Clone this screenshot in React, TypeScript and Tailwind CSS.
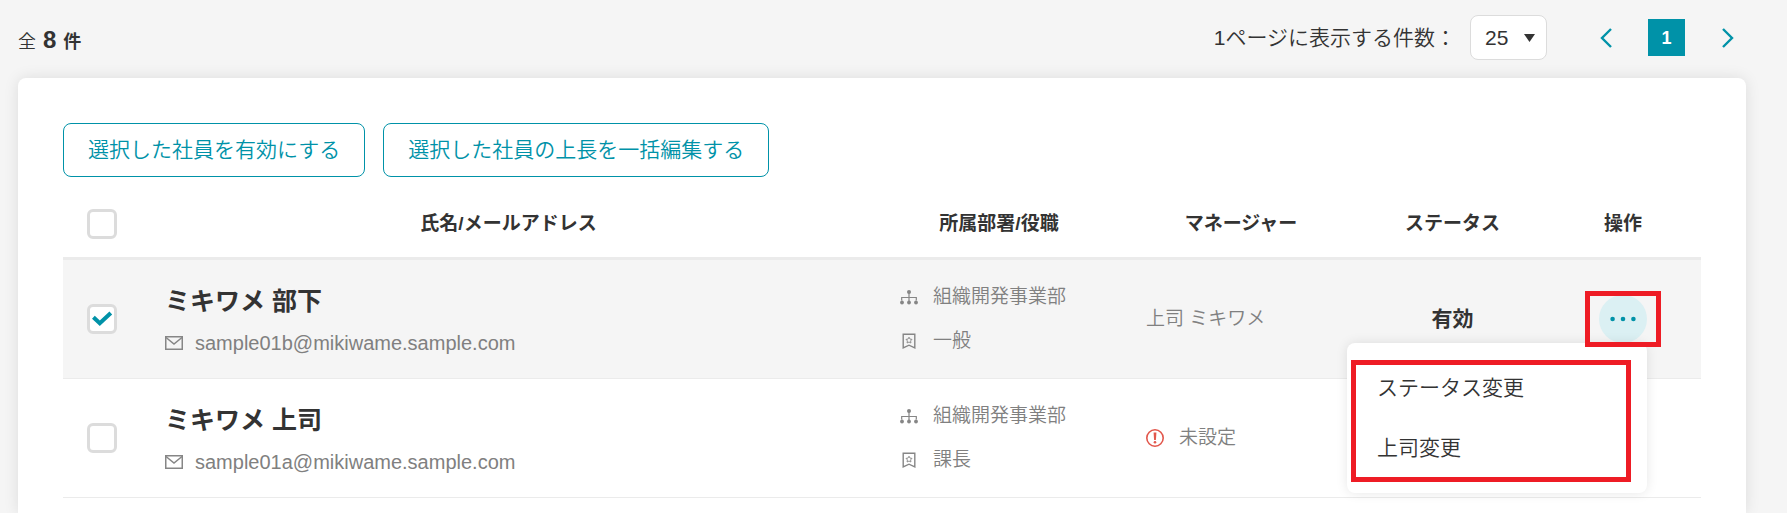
import { useState } from 'react';
import type { ReactNode } from 'react';

interface Employee {
  id: string;
  name: string;
  email: string;
  department: string;
  position: string;
  manager: string | null;
  status: string | null;
}

const employees: Employee[] = [
  {
    id: '01b',
    name: 'ミキワメ 部下',
    email: 'sample01b@mikiwame.sample.com',
    department: '組織開発事業部',
    position: '一般',
    manager: '上司 ミキワメ',
    status: '有効',
  },
  {
    id: '01a',
    name: 'ミキワメ 上司',
    email: 'sample01a@mikiwame.sample.com',
    department: '組織開発事業部',
    position: '課長',
    manager: null,
    status: null,
  },
];

function MailIcon() {
  return (
    <svg className="h-[18px] w-[18px] shrink-0" viewBox="0 0 18 18" fill="none" stroke="#868686" strokeWidth="1.5" aria-hidden="true">
      <rect x="0.75" y="2.75" width="16.5" height="12.5" />
      <path d="M1 3.5L9 10L17 3.5" />
    </svg>
  );
}

function DepartmentIcon() {
  return (
    <svg className="h-[18px] w-[18px] shrink-0" viewBox="0 0 18 18" fill="#868686" aria-hidden="true">
      <circle cx="9" cy="4" r="2" />
      <circle cx="2" cy="14.5" r="1.9" />
      <circle cx="9" cy="14.5" r="1.9" />
      <circle cx="16" cy="14.5" r="1.9" />
      <path d="M9 4V14M1.7 12.5V9.5H16.3V12.5" fill="none" stroke="#868686" strokeWidth="1.2" />
    </svg>
  );
}

function PositionIcon() {
  return (
    <svg className="h-[18px] w-[18px] shrink-0" viewBox="0 0 18 18" fill="none" stroke="#868686" aria-hidden="true">
      <path d="M3.2 2.2H14.8V16L9 13.2L3.2 16Z" strokeWidth="1.4" />
      <path d="M9 5.2L10 7.1L12 7.4L10.6 8.9L10.9 11L9 10L7.1 11L7.4 8.9L6 7.4L8 7.1Z" strokeWidth="0.9" />
    </svg>
  );
}

function AlertIcon() {
  return (
    <svg className="h-[18px] w-[18px] shrink-0" viewBox="0 0 18 18" fill="none" aria-hidden="true">
      <circle cx="9" cy="9" r="8.2" stroke="#e2574c" strokeWidth="1.6" />
      <path d="M7.6 3.6H10.4L9.9 11H8.1Z" fill="#e2574c" />
      <circle cx="9" cy="13.3" r="1.3" fill="#e2574c" />
    </svg>
  );
}

function Checkbox({ label, checked, onChange }: { label: string; checked: boolean; onChange: () => void }) {
  return (
    <label className="relative block h-[30px] w-[30px]">
      <input
        type="checkbox"
        aria-label={label}
        checked={checked}
        onChange={onChange}
        className="block h-[30px] w-[30px] appearance-none rounded-md border-3 border-[#dcdcdc] bg-white"
      />
      {checked && (
        <svg className="pointer-events-none absolute inset-0" viewBox="0 0 30 30" fill="none" aria-hidden="true">
          <path d="M6.4 13.2L12.8 19.3L23.8 9" stroke="#0092a8" strokeWidth="4" />
        </svg>
      )}
    </label>
  );
}

function OutlineButton({ children }: { children: ReactNode }) {
  return (
    <button type="button" className="h-[54px] rounded-lg border border-[#0092a8] bg-white px-6 text-[21px] font-[350] text-[#0092a8]">
      {children}
    </button>
  );
}

function ActionMenu({ open, onToggle }: { open: boolean; onToggle: () => void }) {
  return (
    <div className="relative mx-auto h-12 w-12">
      <button
        type="button"
        aria-label="操作メニュー"
        onClick={onToggle}
        className={`flex h-12 w-12 items-center justify-center rounded-full ${open ? 'bg-[#dbf0f3]' : ''}`}
      >
        <svg className="h-[6px] w-[26px]" viewBox="0 0 26 6" fill="#0092a8" aria-hidden="true">
          <circle cx="2.6" cy="3" r="2.3" />
          <circle cx="13" cy="3" r="2.3" />
          <circle cx="23.4" cy="3" r="2.3" />
        </svg>
      </button>
      {open && (
        <>
          <div className="absolute top-full right-0 z-10 w-[300px] rounded-lg bg-white py-[15px] shadow-[0_0_12px_rgba(0,0,0,0.1)]">
            <button type="button" className="block h-[60px] w-full px-[30px] text-left text-[21px] font-[350]">
              ステータス変更
            </button>
            <button type="button" className="block h-[60px] w-full px-[30px] text-left text-[21px] font-[350]">
              上司変更
            </button>
            <div className="pointer-events-none absolute top-[17px] right-4 bottom-[11px] left-1 border-5 border-[#ee1c25]" />
          </div>
          <div className="pointer-events-none absolute -inset-x-[14px] -inset-y-1 z-20 border-5 border-[#ee1c25]" />
        </>
      )}
    </div>
  );
}

export default function App() {
  const [selected, setSelected] = useState<string[]>(['01b']);
  const [openMenu, setOpenMenu] = useState<string | null>('01b');
  const [pageSize, setPageSize] = useState('25');

  const allSelected = selected.length === employees.length;

  function toggle(id: string) {
    setSelected(ids => (ids.includes(id) ? ids.filter(item => item !== id) : [...ids, id]));
  }

  return (
    <div className="flex min-h-screen flex-col overflow-x-hidden bg-[#f5f5f5] pr-[41px] pl-[18px] font-['Liberation_Sans','Noto_Sans_CJK_JP',sans-serif] text-[#333]">
      <header className="flex items-center justify-between pt-[15px] pb-[18px]">
        <p className="flex items-baseline gap-[7px] pt-1 text-lg font-bold">
          <span className="font-[350]">全</span>
          <span className="text-2xl">8</span>
          <span>件</span>
        </p>
        <div className="flex items-center">
          <label htmlFor="page-size" className="mr-[14px] text-[21px] font-[350]">
            1ページに表示する件数：
          </label>
          <div className="relative">
            <select
              id="page-size"
              value={pageSize}
              onChange={e => setPageSize(e.target.value)}
              className="block h-[45px] w-[77px] appearance-none rounded-lg border border-[#dcdcdc] bg-white pl-[14px] text-[21px]"
            >
              <option value="25">25</option>
              <option value="50">50</option>
              <option value="100">100</option>
            </select>
            <svg className="pointer-events-none absolute top-[19px] right-3 h-2 w-[11px]" viewBox="0 0 11 8" fill="#333" aria-hidden="true">
              <path d="M0 0H11L5.5 8Z" />
            </svg>
          </div>
          <nav className="ml-10 flex items-center gap-6" aria-label="ページ">
            <button type="button" aria-label="前へ" className="flex h-[37px] w-[37px] items-center justify-center">
              <svg className="h-5 w-3" viewBox="0 0 12 20" fill="none" stroke="#0092a8" strokeWidth="2.4" aria-hidden="true">
                <path d="M11 1L2 10L11 19" />
              </svg>
            </button>
            <button type="button" className="h-[37px] w-[37px] bg-[#0092a8] text-lg font-bold text-white">
              1
            </button>
            <button type="button" aria-label="次へ" className="flex h-[37px] w-[37px] items-center justify-center">
              <svg className="h-5 w-3" viewBox="0 0 12 20" fill="none" stroke="#0092a8" strokeWidth="2.4" aria-hidden="true">
                <path d="M1 1L10 10L1 19" />
              </svg>
            </button>
          </nav>
        </div>
      </header>

      <main className="flex-1 rounded-t-lg bg-white px-[45px] pt-[45px] shadow-[0_0_15px_rgba(0,0,0,0.1)]">
        <div className="flex gap-[18px]">
          <OutlineButton>選択した社員を有効にする</OutlineButton>
          <OutlineButton>選択した社員の上長を一括編集する</OutlineButton>
        </div>

        <table className="mt-[14px] w-full table-fixed border-separate border-spacing-0">
          <thead>
            <tr className="h-[69px] text-[19px] *:border-b-3 *:border-[#ebebeb] *:p-0">
              <th className="w-[78px]">
                <div className="pl-6">
                  <Checkbox
                    label="すべて選択"
                    checked={allSelected}
                    onChange={() => setSelected(allSelected ? [] : employees.map(employee => employee.id))}
                  />
                </div>
              </th>
              <th>氏名/メールアドレス</th>
              <th className="w-[246px]">所属部署/役職</th>
              <th className="w-[238px]">マネージャー</th>
              <th className="w-[185px]">ステータス</th>
              <th className="w-[156px]">操作</th>
            </tr>
          </thead>
          <tbody>
            {employees.map(employee => (
              <tr
                key={employee.id}
                className={`h-[119px] text-[19px] font-[350] text-[#808080] *:border-b *:border-[#ebebeb] ${
                  selected.includes(employee.id) ? 'bg-[#f5f5f5]' : ''
                }`}
              >
                <td className="pl-6">
                  <Checkbox
                    label={employee.name}
                    checked={selected.includes(employee.id)}
                    onChange={() => toggle(employee.id)}
                  />
                </td>
                <td className="px-6 pt-1">
                  <p className="text-[25px] leading-10 font-bold text-[#333]">{employee.name}</p>
                  <p className="mt-1 flex items-center gap-3 text-xl leading-9 font-normal">
                    <MailIcon />
                    {employee.email}
                  </p>
                </td>
                <td className="px-6">
                  <p className="flex items-center gap-[15px] leading-9">
                    <DepartmentIcon />
                    {employee.department}
                  </p>
                  <p className="mt-2 flex items-center gap-[15px] leading-9">
                    <PositionIcon />
                    {employee.position}
                  </p>
                </td>
                <td className="px-6">
                  {employee.manager ? (
                    employee.manager
                  ) : (
                    <p className="flex items-center gap-[15px]">
                      <AlertIcon />
                      未設定
                    </p>
                  )}
                </td>
                <td className="text-center text-[21px] font-bold text-[#333]">{employee.status}</td>
                <td className="text-[#333]">
                  <ActionMenu
                    open={openMenu === employee.id}
                    onToggle={() => setOpenMenu(openMenu === employee.id ? null : employee.id)}
                  />
                </td>
              </tr>
            ))}
          </tbody>
        </table>
      </main>
    </div>
  );
}
